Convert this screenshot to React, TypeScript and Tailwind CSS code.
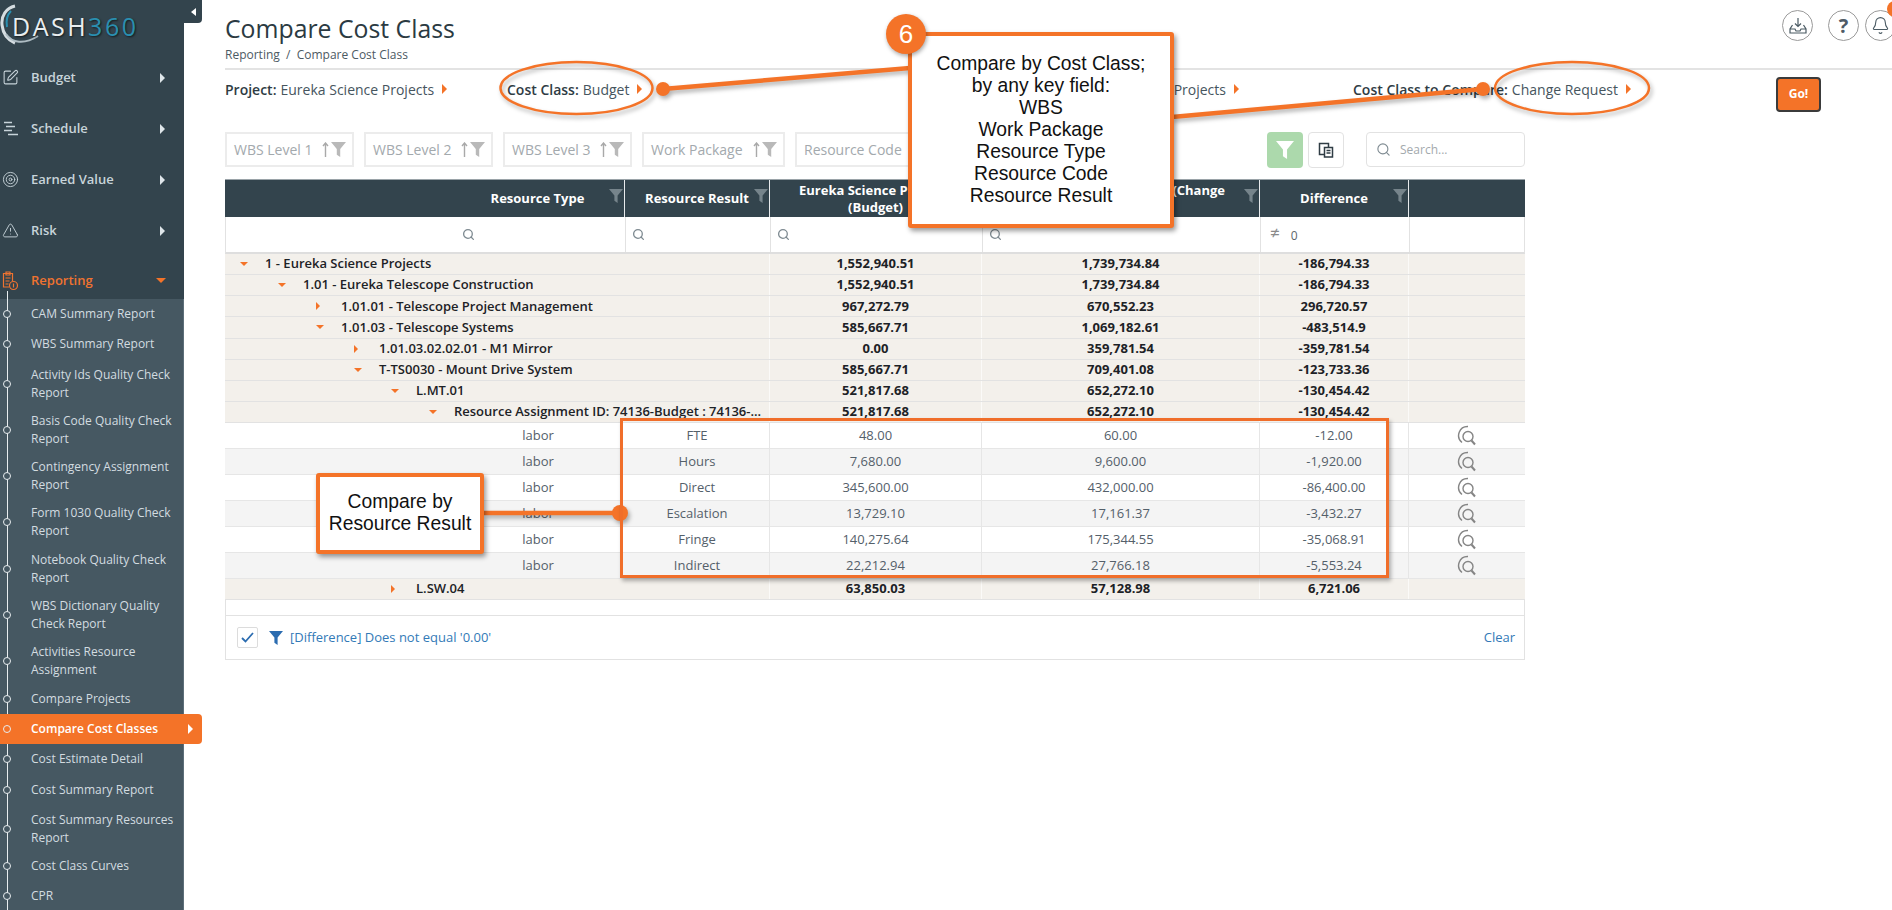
import { Bell, Search, SquarePen, Target, TriangleAlert } from "lucide-react"

const sans = "font-['Open_Sans',sans-serif]"

const topMenu = [
  { label: "Budget", icon: <SquarePen className="w-[17px] h-[17px]" strokeWidth={1.5} /> },
  { label: "Schedule", icon: <ScheduleIcon /> },
  { label: "Earned Value", icon: <Target className="w-[17px] h-[17px]" strokeWidth={1.3} /> },
  { label: "Risk", icon: <TriangleAlert className="w-[17px] h-[17px]" strokeWidth={1.3} /> },
]

const subMenu = [
  ["CAM Summary Report"],
  ["WBS Summary Report"],
  ["Activity Ids Quality Check", "Report"],
  ["Basis Code Quality Check", "Report"],
  ["Contingency Assignment", "Report"],
  ["Form 1030 Quality Check", "Report"],
  ["Notebook Quality Check", "Report"],
  ["WBS Dictionary Quality", "Check Report"],
  ["Activities Resource", "Assignment"],
  ["Compare Projects"],
  ["Compare Cost Classes"],
  ["Cost Estimate Detail"],
  ["Cost Summary Report"],
  ["Cost Summary Resources", "Report"],
  ["Cost Class Curves"],
  ["CPR"],
]

const chips = [
  { label: "WBS Level 1", width: "w-[129px]" },
  { label: "WBS Level 2", width: "w-[129px]" },
  { label: "WBS Level 3", width: "w-[129px]" },
  { label: "Work Package", width: "w-[143px]" },
  { label: "Resource Code", width: "w-[150px]" },
]

const groupRows = [
  { pad: "pl-[14px]", open: true, label: "1 - Eureka Science Projects", a: "1,552,940.51", b: "1,739,734.84", c: "-186,794.33" },
  { pad: "pl-[52px]", open: true, label: "1.01 - Eureka Telescope Construction", a: "1,552,940.51", b: "1,739,734.84", c: "-186,794.33" },
  { pad: "pl-[90px]", open: false, label: "1.01.01 - Telescope Project Management", a: "967,272.79", b: "670,552.23", c: "296,720.57" },
  { pad: "pl-[90px]", open: true, label: "1.01.03 - Telescope Systems", a: "585,667.71", b: "1,069,182.61", c: "-483,514.9" },
  { pad: "pl-[128px]", open: false, label: "1.01.03.02.02.01 - M1 Mirror", a: "0.00", b: "359,781.54", c: "-359,781.54" },
  { pad: "pl-[128px]", open: true, label: "T-TS0030 - Mount Drive System", a: "585,667.71", b: "709,401.08", c: "-123,733.36" },
  { pad: "pl-[165px]", open: true, label: "L.MT.01", a: "521,817.68", b: "652,272.10", c: "-130,454.42" },
  { pad: "pl-[203px]", open: true, label: "Resource Assignment ID: 74136-Budget : 74136-...", a: "521,817.68", b: "652,272.10", c: "-130,454.42" },
]

const detailRows = [
  ["FTE", "48.00", "60.00", "-12.00"],
  ["Hours", "7,680.00", "9,600.00", "-1,920.00"],
  ["Direct", "345,600.00", "432,000.00", "-86,400.00"],
  ["Escalation", "13,729.10", "17,161.37", "-3,432.27"],
  ["Fringe", "140,275.64", "175,344.55", "-35,068.91"],
  ["Indirect", "22,212.94", "27,766.18", "-5,553.24"],
]

const gridCols = "grid grid-cols-[400px_145px_212px_278px_149px_116px]"

function ScheduleIcon() {
  return (
    <svg width="17" height="15" viewBox="0 0 17 15" fill="none" stroke="currentColor" strokeWidth="1.5">
      <path d="M2 1.5h8M4 5.5h9M2 9.5h8M6 13.5h10" />
    </svg>
  )
}

function ReportIcon() {
  return (
    <svg width="17" height="20" viewBox="0 0 17 20" fill="none" stroke="currentColor" strokeWidth="1.2">
      <path d="M7 16H1.5V2.5h9V10" />
      <path d="M4 1h4v3H4zM3.5 7h5M3.5 10h4M3.5 13h3" />
      <circle cx="11.5" cy="14.5" r="4" />
      <path d="M11.5 12.5v4" />
    </svg>
  )
}

function Funnel({ className }: { className: string }) {
  return (
    <svg viewBox="0 0 14 14" className={className} fill="currentColor">
      <path d="M0 0h14L8.6 6.6V14L5.4 11.8V6.6z" />
    </svg>
  )
}

function TriRight({ className }: { className: string }) {
  return <span className={`inline-block w-0 h-0 border-y-[4px] border-y-transparent border-l-[4px] ${className}`} />
}

function TriDown({ className }: { className: string }) {
  return <span className={`inline-block w-0 h-0 border-x-[4px] border-x-transparent border-t-[4px] ${className}`} />
}

function DetailIcon() {
  return (
    <svg width="20" height="22" viewBox="0 0 20 22" fill="none" stroke="#858585" strokeWidth="1.4">
      <path d="M11 1.5A9 9 0 0 0 5 17.5" />
      <circle cx="11" cy="11.5" r="5" />
      <path d="M14.5 15.5l3.5 4" strokeWidth="2" />
    </svg>
  )
}

function Logo() {
  return (
    <div className="relative h-[52px] pl-[12px] pt-[8px]">
      <svg width="44" height="50" viewBox="0 0 44 50" fill="none" className="absolute left-0 top-0">
        <path d="M15 6C6 8 1 16 2 25c1 9 6 15 13 18" stroke="#d5dde1" strokeWidth="3" />
        <path d="M11 11C7 15 6 21 7 27" stroke="#2a8fb0" strokeWidth="2" />
        <path d="M6 34c6 9 18 11 32 2" stroke="#aebcc3" strokeWidth="2" />
      </svg>
      <div className={`${sans} relative text-[25px] leading-[36px] tracking-[2.5px] font-medium text-[#e9eef0] [text-shadow:1px_1px_2px_rgba(0,0,0,0.6)]`}>
        DASH<span className="text-[#2a8fb0]">360</span>
      </div>
    </div>
  )
}

function Sidebar() {
  return (
    <aside className="relative w-[184px] shrink-0 bg-[#33444d]">
      <div className="absolute left-[184px] top-0 w-[18px] h-[23px] bg-[#33444d] rounded-br-[4px] flex items-center justify-center">
        <span className="inline-block w-0 h-0 border-y-[4px] border-y-transparent border-r-[5px] border-r-white" />
      </div>
      <Logo />
      {topMenu.map((item) => (
        <div key={item.label} className="h-[51px] flex items-center text-[#c8d4da]">
          <span className="w-[31px] pl-[2px] shrink-0 flex items-center">{item.icon}</span>
          <span className="text-[13px] font-semibold flex-1">{item.label}</span>
          <TriRight className="border-l-[#dfe6ea] border-y-[5px] border-l-[5px] mr-[19px]" />
        </div>
      ))}
      <div className="h-[43px] pt-[6px] flex items-center text-[#ef7330]">
        <span className="w-[31px] pl-[2px] shrink-0 flex items-center"><ReportIcon /></span>
        <span className="text-[13px] font-semibold flex-1">Reporting</span>
        <TriDown className="border-t-[#f47328] border-x-[5px] border-t-[5px] mr-[18px]" />
      </div>
      <div className="relative bg-[#465862] border-r border-r-[#5d6f79] pb-[20px]">
        <div className="absolute left-[7px] -top-[8px] bottom-0 w-px bg-[#e8edef]" />
        {subMenu.map((lines) => {
          const active = lines[0] === "Compare Cost Classes"
          const two = lines.length > 1
          return (
            <div
              key={lines[0]}
              className={`relative pl-[31px] text-[12px] leading-[18px] ${two ? "h-[46.3px] pt-[6px]" : "h-[30.3px] pt-[6px]"} ${
                active ? "w-[202px] bg-[#f47328] rounded-r-[4px] text-white font-semibold" : "text-[#d3dce0]"
              }`}
            >
              <span
                className={`absolute left-[3px] w-[8px] h-[8px] rounded-full border border-[#e8edef] ${two ? "top-[20px]" : "top-[11px]"} ${
                  active ? "bg-[#f47328]" : "bg-[#465862]"
                }`}
              />
              {lines.map((line) => (
                <div key={line} className="whitespace-nowrap">{line}</div>
              ))}
              {active && <TriRight className="absolute left-[188px] top-[10px] border-l-white border-y-[5px] border-l-[5px]" />}
            </div>
          )
        })}
      </div>
    </aside>
  )
}

function TopIcons() {
  return (
    <div className="absolute left-[1782px] top-[10px] flex items-center text-[#4a5a63]">
      <div className="w-[31px] h-[31px] rounded-full border border-[#9a9a9a] flex items-center justify-center">
        <svg width="18" height="18" viewBox="0 0 18 18" fill="none" stroke="currentColor" strokeWidth="1.2">
          <path d="M9 1v8M6 6.5L9 9.5l3-3" />
          <path d="M3.5 8L1 12v4h16v-4l-2.5-4M1 12h5l1 2h4l1-2h5" />
        </svg>
      </div>
      <div className="ml-[15px] w-[31px] h-[31px] rounded-full border border-[#9a9a9a] flex items-center justify-center text-[20px] font-bold text-[#4f5b66]">
        ?
      </div>
      <div className="relative ml-[6px] w-[31px] h-[31px] rounded-full border border-[#9a9a9a] flex items-center justify-center">
        <Bell className="w-[19px] h-[19px]" strokeWidth={1.4} />
        <span className="absolute left-[21px] -top-[10px] w-[16px] h-[16px] rounded-full bg-[#f47328]" />
      </div>
    </div>
  )
}

function SelectorRow() {
  const item = (name: string, value: string) => (
    <>
      <span className="font-semibold text-[#2f3c44]">{name}:</span>
      <span className="ml-[4px] text-[#46555e]">{value}</span>
      <TriRight className="ml-[8px] border-l-[#f47328] border-y-[5px] border-l-[5px]" />
    </>
  )
  return (
    <div className="h-[38px] mb-[24px] flex items-center text-[14px] whitespace-nowrap">
      <div className="w-[282px] flex items-center">{item("Project", "Eureka Science Projects")}</div>
      <div className="w-[300px] flex items-center">{item("Cost Class", "Budget")}</div>
      <div className="w-[432px] flex items-center justify-end">{item("Project to Compare", "Eureka Science Projects")}</div>
      <div className="ml-[114px] w-[423px] flex items-center">{item("Cost Class to Compare", "Change Request")}</div>
      <button className="mt-[10px] w-[45px] h-[35px] bg-[#f47328] border-2 border-[#3b3b3b] rounded-[4px] text-white text-[12px] font-bold">
        Go!
      </button>
    </div>
  )
}

function FilterRow() {
  return (
    <div className="h-[36px] mb-[11px] w-[1300px] flex items-start">
      <div className="flex gap-[10px]">
        {chips.map((chip) => (
          <div key={chip.label} className={`${chip.width} h-[35px] border-2 border-[#ececec] pl-[7px] flex items-center text-[14px] text-[#a3a9ad]`}>
            <span className="whitespace-nowrap">{chip.label}</span>
            <svg width="7" height="15" viewBox="0 0 7 15" fill="none" stroke="#a9a9a9" strokeWidth="1.4" className="ml-[10px]">
              <path d="M3.5 15V1.5M1 4l2.5-3L6 4" />
            </svg>
            <Funnel className="ml-[2px] w-[15px] h-[15px] text-[#b9b9b9]" />
          </div>
        ))}
      </div>
      <div className="ml-[322px] flex gap-[5px]">
        <div className="w-[36px] h-[36px] rounded-[4px] bg-[#acd9ac] flex items-center justify-center">
          <Funnel className="w-[18px] h-[18px] text-white" />
        </div>
        <div className="w-[36px] h-[36px] rounded-[4px] border border-[#e2e2e2] flex items-center justify-center">
          <svg width="16" height="16" viewBox="0 0 16 16" fill="none" stroke="#2f3c44" strokeWidth="1.5">
            <path d="M8 12.5H1.5V1.5h9V5" />
            <path d="M6.5 5.5h8v9.5h-8zM8.5 8.5h4M8.5 11h4" fill="#fff" />
          </svg>
        </div>
      </div>
      <div className="ml-[22px] w-[159px] h-[35px] rounded-[4px] border border-[#e2e2e2] flex items-center pl-[9px] text-[12px] text-[#a3a9ad]">
        <Search className="w-[15px] h-[15px] text-[#7e8a91]" strokeWidth={1.8} />
        <span className="ml-[9px]">Search...</span>
      </div>
    </div>
  )
}

function HeaderCell({ children, lines }: { children: React.ReactNode; lines?: boolean }) {
  return (
    <div className={`relative h-full flex items-center justify-center text-center text-white font-bold text-[13px] ${lines ? "leading-[17px]" : ""} border-r border-r-[#e8ebed]`}>
      {children}
      <Funnel className="absolute right-[1px] top-[9px] w-[14px] h-[14px] text-[#76848b]" />
    </div>
  )
}

function CompareTable() {
  const cell = "flex items-center justify-center border-r border-r-[#e6e6e6]"
  return (
    <div className="w-[1300px] text-[13px]">
      <div className={`${gridCols} h-[38px] bg-[#33444d] border-t border-t-[#9aa3a8]`}>
        <div className="relative h-full text-white font-bold text-[13px] border-r border-r-[#e8ebed] flex items-center pl-[226px] justify-center">
          Resource Type
          <Funnel className="absolute right-[1px] top-[9px] w-[14px] h-[14px] text-[#76848b]" />
        </div>
        <HeaderCell>Resource Result</HeaderCell>
        <HeaderCell lines>
          <span>Eureka Science Projects<br />(Budget)</span>
        </HeaderCell>
        <HeaderCell lines>
          <span>Eureka Science Projects (Change<br />Request)</span>
        </HeaderCell>
        <HeaderCell>Difference</HeaderCell>
        <div />
      </div>
      <div className={`${gridCols} h-[37px] border-x border-x-[#e2e2e2] border-b-2 border-b-[#dedede] text-[#7e8a91]`}>
        <div className="border-r border-r-[#e2e2e2] flex items-center pl-[236px]"><Search className="w-[13px] h-[13px]" strokeWidth={2.4} /></div>
        <div className="border-r border-r-[#e2e2e2] flex items-center pl-[6px]"><Search className="w-[13px] h-[13px]" strokeWidth={2.4} /></div>
        <div className="border-r border-r-[#e2e2e2] flex items-center pl-[6px]"><Search className="w-[13px] h-[13px]" strokeWidth={2.4} /></div>
        <div className="border-r border-r-[#e2e2e2] flex items-center pl-[6px]"><Search className="w-[13px] h-[13px]" strokeWidth={2.4} /></div>
        <div className="border-r border-r-[#e2e2e2] flex items-center pl-[9px] text-[12px]">
          <span className="text-[17px] text-[#8a8a8a] -mt-[3px]">≠</span>
          <span className="ml-[11px] mt-[3px] text-[#5c666c]">0</span>
        </div>
        <div />
      </div>
      {groupRows.map((row) => (
        <div key={row.label} className={`${gridCols} h-[21.125px] bg-[#f3f0eb] border-b-[1.5px] border-b-[#e2e2e2] text-[#1d2226]`}>
          <div className={`col-span-2 ${row.pad} flex items-center font-semibold border-r border-r-[#fbfaf8] whitespace-nowrap`}>
            <span className="w-[26px] shrink-0 flex pl-[1px]">
              {row.open ? <TriDown className="border-t-[#f47328]" /> : <TriRight className="border-l-[#f47328]" />}
            </span>
            {row.label}
          </div>
          <div className="flex items-center justify-center font-bold border-r border-r-[#fbfaf8]">{row.a}</div>
          <div className="flex items-center justify-center font-bold border-r border-r-[#fbfaf8]">{row.b}</div>
          <div className="flex items-center justify-center font-bold border-r border-r-[#fbfaf8]">{row.c}</div>
          <div />
        </div>
      ))}
      {detailRows.map((row, i) => (
        <div key={row[0]} className={`${gridCols} h-[26px] border-b-[1.5px] border-b-[#e6e6e6] text-[#54606a] ${i % 2 ? "bg-[#f4f4f4]" : "bg-white"}`}>
          <div className="pl-[226px] flex items-center justify-center">labor</div>
          <div className={cell}>{row[0]}</div>
          <div className={cell}>{row[1]}</div>
          <div className={cell}>{row[2]}</div>
          <div className={cell}>{row[3]}</div>
          <div className="flex items-center justify-center">
            <DetailIcon />
          </div>
        </div>
      ))}
      <div className={`${gridCols} h-[21px] bg-[#f3f0eb] border-b-[1.5px] border-b-[#e2e2e2] text-[#1d2226]`}>
        <div className="col-span-2 pl-[165px] flex items-center font-semibold border-r border-r-[#fbfaf8]">
          <span className="w-[26px] flex pl-[1px]"><TriRight className="border-l-[#f47328]" /></span>
          L.SW.04
        </div>
        <div className="flex items-center justify-center font-bold border-r border-r-[#fbfaf8]">63,850.03</div>
        <div className="flex items-center justify-center font-bold border-r border-r-[#fbfaf8]">57,128.98</div>
        <div className="flex items-center justify-center font-bold border-r border-r-[#fbfaf8]">6,721.06</div>
        <div />
      </div>
      <div className="border-x border-b border-[#e2e2e2]">
        <div className="h-[16px] border-b border-b-[#e2e2e2]" />
        <div className="h-[43px] flex items-center pl-[11px] pr-[9px] text-[13px] text-[#337ab7]">
          <span className="w-[21px] h-[21px] border border-[#dcdcdc] rounded-[2px] flex items-center justify-center">
            <svg width="13" height="11" viewBox="0 0 13 11" fill="none" stroke="#2b6cb0" strokeWidth="1.8"><path d="M1 6l3.5 3.5L12 1" /></svg>
          </span>
          <Funnel className="ml-[11px] w-[14px] h-[16px] text-[#2b6cb0]" />
          <span className="ml-[7px]">[Difference] Does not equal '0.00'</span>
          <span className="ml-auto">Clear</span>
        </div>
      </div>
    </div>
  )
}

function Annotations() {
  return (
    <>
      <svg width="1892" height="910" viewBox="0 0 1892 910" fill="none" className="absolute left-0 top-0 pointer-events-none drop-shadow-[2px_3px_2px_rgba(0,0,0,0.3)]">
        <ellipse cx="576.5" cy="88" rx="76" ry="26" stroke="#f47328" strokeWidth="2.5" />
        <ellipse cx="1572" cy="88" rx="77" ry="26" stroke="#f47328" strokeWidth="2.5" />
        <path d="M663 89L910 68M1172 117L1483 89M484 513H620" stroke="#f47328" strokeWidth="4.5" />
        <circle cx="663" cy="89" r="7" fill="#f47328" />
        <circle cx="1483" cy="89" r="7" fill="#f47328" />
        <circle cx="620" cy="513" r="8" fill="#f47328" />
      </svg>
      <div className="absolute left-[620px] top-[418px] w-[769px] h-[160px] border-[3px] border-[#f06e2a] shadow-[2px_3px_4px_rgba(0,0,0,0.3)] pointer-events-none" />
      <div className="absolute left-[908px] top-[32px] w-[266px] h-[196px] bg-white border-[4px] border-[#f47328] rounded-[3px] shadow-[2px_3px_5px_rgba(0,0,0,0.4)] pt-[17px] text-center font-['Liberation_Sans',sans-serif] text-[19.3px] leading-[22px] text-[#111]">
        Compare by Cost Class;<br />by any key field:<br />WBS<br />Work Package<br />Resource Type<br />Resource Code<br />Resource Result
      </div>
      <div className="absolute left-[886px] top-[14px] w-[40px] h-[40px] rounded-full bg-[#f47328] shadow-[1px_2px_4px_rgba(0,0,0,0.35)] flex items-center justify-center font-['Liberation_Sans',sans-serif] text-[26px] text-white">
        6
      </div>
      <div className="absolute left-[316px] top-[473px] w-[168px] h-[81px] bg-white border-[4px] border-[#f47328] rounded-[3px] shadow-[2px_3px_5px_rgba(0,0,0,0.4)] pt-[14px] text-center font-['Liberation_Sans',sans-serif] text-[19.3px] leading-[22px] text-[#111]">
        Compare by<br />Resource Result
      </div>
    </>
  )
}

export default function App() {
  return (
    <div className={`${sans} relative w-[1892px] h-[910px] flex bg-white overflow-hidden`}>
      <Sidebar />
      <main className="flex-1 pl-[41px] min-w-0">
        <div className="h-[70px] border-b-2 border-b-[#e3e3e3]">
          <h1 className="pt-[11px] text-[24.8px] leading-[34px] text-[#2b3a42]">Compare Cost Class</h1>
          <div className="mt-[2px] text-[12px] leading-[16px] text-[#4d5a63]">Reporting&nbsp; / &nbsp;Compare Cost Class</div>
        </div>
        <SelectorRow />
        <FilterRow />
        <CompareTable />
      </main>
      <TopIcons />
      <Annotations />
    </div>
  )
}
